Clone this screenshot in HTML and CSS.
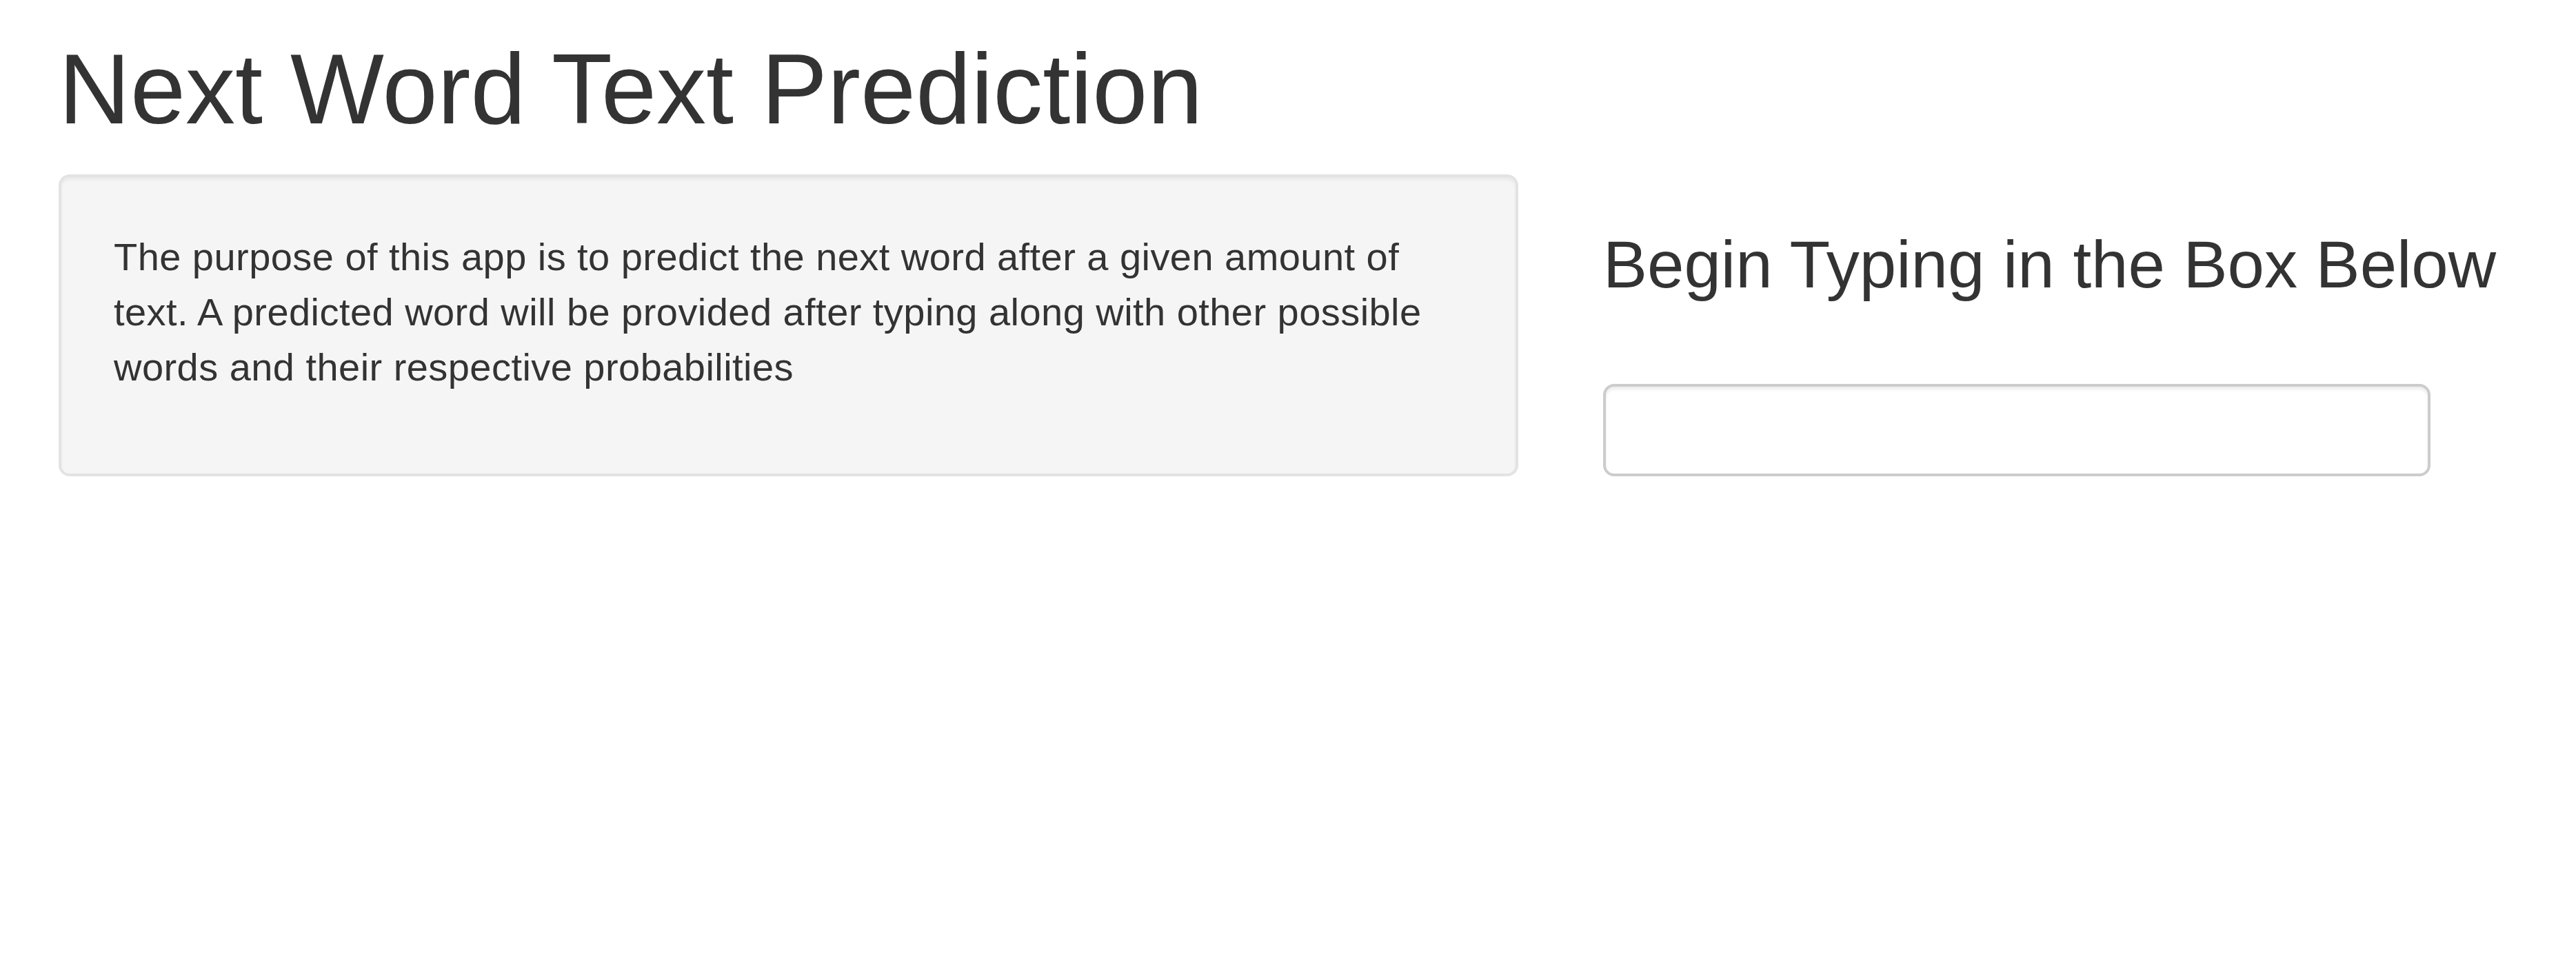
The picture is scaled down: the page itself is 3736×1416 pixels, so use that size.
FILE: index.html
```html
<!DOCTYPE html>
<html lang="en">
<head>
<meta charset="utf-8">
<title>Next Word Text Prediction</title>
<link rel="stylesheet" href="styles.css">
</head>
<body>
<div class="page">
  <h1 class="title">Next Word Text Prediction</h1>
  <div class="row">
    <div class="side">
      <div class="well">
        <p>The purpose of this app is to predict the next word after a given amount of text. A predicted word will be provided after typing along with other possible words and their respective probabilities</p>
      </div>
    </div>
    <div class="main">
      <h3 class="prompt">Begin Typing in the Box Below</h3>
      <div class="form-group">
        <input class="form-control" type="text" value="">
      </div>
    </div>
  </div>
</div>
</body>
</html>
```

FILE: styles.css
```css
html, body {
  margin: 0;
  background: #fff;
}

body {
  font-family: "Liberation Sans", Arial, Helvetica, sans-serif;
  font-size: 56px;
  line-height: 80px;
  color: #333;
}

.page {
  padding-left: 85px;
}

.title {
  margin: 51px 0 44px;
  font-size: 144px;
  line-height: 1.1;
  font-weight: 500;
}

.row {
  display: flex;
  align-items: flex-start;
  gap: 123px;
}

.side {
  flex: none;
  width: 2117px;
}

.well {
  box-sizing: border-box;
  padding: 76px 76px 74px;
  border: 4px solid #e3e3e3;
  border-radius: 16px;
  background: #f5f5f5;
  box-shadow: inset 0 4px 4px rgba(0, 0, 0, 0.05);
}

.well p {
  margin: 0 0 40px;
  letter-spacing: 0.45px;
}

.main {
  flex: 1;
}

.prompt {
  margin: 78px 0 120px;
  font-size: 96px;
  line-height: 1.1;
  font-weight: 500;
}

.form-group {
  margin: 0;
}

.form-control {
  display: block;
  box-sizing: border-box;
  width: 1200px;
  height: 134px;
  padding: 24px 48px;
  border: 4px solid #ccc;
  border-radius: 16px;
  background: #fff;
  box-shadow: inset 0 4px 4px rgba(0, 0, 0, 0.075);
  font-family: inherit;
  font-size: 56px;
  color: #555;
  outline: none;
}
```
